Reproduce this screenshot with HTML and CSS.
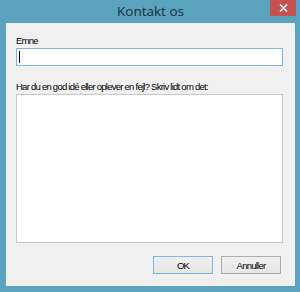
FILE: index.html
```html
<!DOCTYPE html>
<html>
<head>
<meta charset="utf-8">
<link rel="stylesheet" href="styles.css">
</head>
<body>
<div class="window">
  <div class="titlebar">
    <span class="title">Kontakt os</span>
    <div class="close">
      <svg width="9" height="8" viewBox="0 0 9 8"><path d="M1 0.5 L8 7.5 M8 0.5 L1 7.5" stroke="#fff" stroke-width="1.6"/></svg>
    </div>
  </div>
  <div class="client">
    <div class="label">Emne</div>
    <div class="input"><span class="caret"></span></div>
    <div class="label label2">Har du en god idé eller oplever en fejl? Skriv lidt om det:</div>
    <div class="textarea"></div>
    <div class="buttons">
      <div class="btn btn-default">OK</div>
      <div class="btn">Annuller</div>
    </div>
  </div>
</div>
</body>
</html>
```
FILE: styles.css
```css
html, body {
  margin: 0;
  padding: 0;
  background: #5aa2bd;
}
.window {
  width: 300px;
  height: 292px;
  background: #5aa2bd;
  display: flex;
  flex-direction: column;
  padding: 0 5px 6px 6px;
  box-sizing: border-box;
}
.titlebar {
  height: 23px;
  position: relative;
  display: flex;
  justify-content: center;
  align-items: center;
}
.title {
  font-family: "Open Sans", "Noto Sans", sans-serif;
  font-size: 13.5px;
  color: #15323b;
  margin-top: -2px;
}
.close {
  position: absolute;
  top: 0;
  right: -1px;
  width: 26px;
  height: 16px;
  background: #c75050;
  display: flex;
  align-items: center;
  justify-content: center;
}
.client {
  flex: 1;
  background: #f0f0f0;
  padding: 11px 12px 0 10px;
  display: flex;
  flex-direction: column;
  font-family: "Liberation Sans", Arial, sans-serif;
  font-size: 9.5px;
  letter-spacing: -0.75px;
  color: #000;
}
.label {
  line-height: 13px;
  margin-bottom: 1px;
  white-space: nowrap;
}
.label2 {
  margin-top: 14px;
}
.input {
  height: 18px;
  box-sizing: border-box;
  border: 1px solid #7eb4ea;
  background: #fff;
  position: relative;
}
.caret {
  position: absolute;
  left: 2px;
  top: 2px;
  width: 1px;
  height: 12px;
  background: #000;
}
.textarea {
  height: 149px;
  box-sizing: border-box;
  border: 1px solid #c5c5cc;
  background: #fff;
}
.buttons {
  display: flex;
  justify-content: flex-end;
  gap: 8px;
  margin-top: 13px;
  padding-right: 2px;
}
.btn {
  width: 60px;
  height: 18px;
  box-sizing: border-box;
  border: 1px solid #acacac;
  background: linear-gradient(#f0f0f0, #e5e5e5);
  display: flex;
  align-items: center;
  justify-content: center;
  color: #000;
}
.btn-default {
  border-color: #7eb4ea;
}
```
